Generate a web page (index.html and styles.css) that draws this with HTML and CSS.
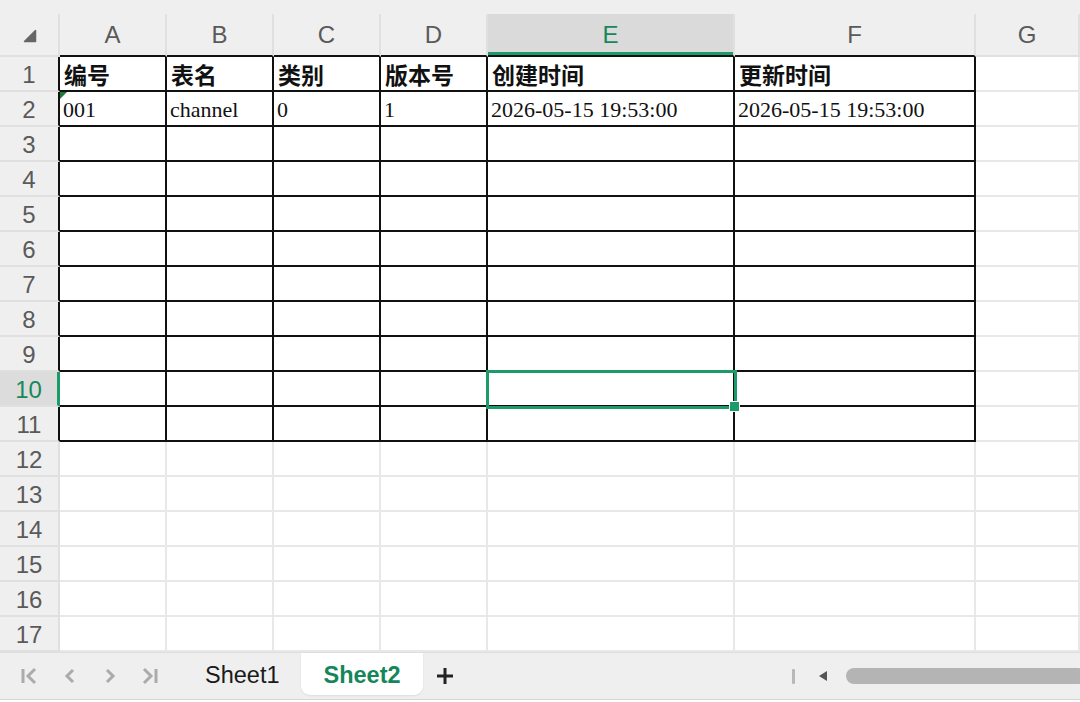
FILE: index.html
```html
<!DOCTYPE html>
<html lang="zh-CN">
  <head>
    <meta charset="UTF-8" />
    <meta name="viewport" content="width=device-width, initial-scale=1.0" />
    <title>Sheet2</title>
    <link rel="stylesheet" href="styles.css">
  </head>
  <body>
    <div class="book">
      <div class="top-strip"></div>
      <div class="sheet">
        <!-- column headers -->
        <div class="ch corner">
          <svg width="14" height="14" viewBox="0 0 14 14"><path d="M12.5 1.5 L12.5 12.5 L1.5 12.5 Z" fill="#666" stroke="#666" stroke-width="1.5" stroke-linejoin="round"/></svg>
        </div>
        <div class="ch edge">A</div>
        <div class="ch edge">B</div>
        <div class="ch edge">C</div>
        <div class="ch edge">D</div>
        <div class="ch edge active">E</div>
        <div class="ch edge">F</div>
        <div class="ch">G</div>

        <div class="rh edge">1</div>
        <div class="cell b hd">编号</div>
        <div class="cell b hd">表名</div>
        <div class="cell b hd">类别</div>
        <div class="cell b hd">版本号</div>
        <div class="cell b hd">创建时间</div>
        <div class="cell b hd">更新时间</div>
        <div class="cell"></div>

        <div class="rh edge">2</div>
        <div class="cell b note">001</div>
        <div class="cell b">channel</div>
        <div class="cell b">0</div>
        <div class="cell b">1</div>
        <div class="cell b">2026-05-15 19:53:00</div>
        <div class="cell b">2026-05-15 19:53:00</div>
        <div class="cell"></div>

        <div class="rh edge">3</div>
        <div class="cell b"></div><div class="cell b"></div><div class="cell b"></div><div class="cell b"></div><div class="cell b"></div><div class="cell b"></div><div class="cell"></div>
        <div class="rh edge">4</div>
        <div class="cell b"></div><div class="cell b"></div><div class="cell b"></div><div class="cell b"></div><div class="cell b"></div><div class="cell b"></div><div class="cell"></div>
        <div class="rh edge">5</div>
        <div class="cell b"></div><div class="cell b"></div><div class="cell b"></div><div class="cell b"></div><div class="cell b"></div><div class="cell b"></div><div class="cell"></div>
        <div class="rh edge">6</div>
        <div class="cell b"></div><div class="cell b"></div><div class="cell b"></div><div class="cell b"></div><div class="cell b"></div><div class="cell b"></div><div class="cell"></div>
        <div class="rh edge">7</div>
        <div class="cell b"></div><div class="cell b"></div><div class="cell b"></div><div class="cell b"></div><div class="cell b"></div><div class="cell b"></div><div class="cell"></div>
        <div class="rh edge">8</div>
        <div class="cell b"></div><div class="cell b"></div><div class="cell b"></div><div class="cell b"></div><div class="cell b"></div><div class="cell b"></div><div class="cell"></div>
        <div class="rh edge">9</div>
        <div class="cell b"></div><div class="cell b"></div><div class="cell b"></div><div class="cell b"></div><div class="cell b"></div><div class="cell b"></div><div class="cell"></div>
        <div class="rh active">10</div>
        <div class="cell b"></div><div class="cell b"></div><div class="cell b"></div><div class="cell b"></div>
        <div class="cell b selected"><span class="sel"><span class="handle"></span></span></div>
        <div class="cell b"></div><div class="cell"></div>
        <div class="rh edge">11</div>
        <div class="cell b"></div><div class="cell b"></div><div class="cell b"></div><div class="cell b"></div><div class="cell b"></div><div class="cell b"></div><div class="cell"></div>

        <div class="rh">12</div>
        <div class="cell"></div><div class="cell"></div><div class="cell"></div><div class="cell"></div><div class="cell"></div><div class="cell"></div><div class="cell"></div>
        <div class="rh">13</div>
        <div class="cell"></div><div class="cell"></div><div class="cell"></div><div class="cell"></div><div class="cell"></div><div class="cell"></div><div class="cell"></div>
        <div class="rh">14</div>
        <div class="cell"></div><div class="cell"></div><div class="cell"></div><div class="cell"></div><div class="cell"></div><div class="cell"></div><div class="cell"></div>
        <div class="rh">15</div>
        <div class="cell"></div><div class="cell"></div><div class="cell"></div><div class="cell"></div><div class="cell"></div><div class="cell"></div><div class="cell"></div>
        <div class="rh">16</div>
        <div class="cell"></div><div class="cell"></div><div class="cell"></div><div class="cell"></div><div class="cell"></div><div class="cell"></div><div class="cell"></div>
        <div class="rh">17</div>
        <div class="cell"></div><div class="cell"></div><div class="cell"></div><div class="cell"></div><div class="cell"></div><div class="cell"></div><div class="cell"></div>
      </div>

      <div class="tabbar">
        <div class="nav">
          <span class="nav-btn">
            <svg width="20" height="20" viewBox="0 0 20 20"><path d="M3 3v14M15 3l-7 7 7 7" fill="none" stroke="#ababab" stroke-width="3"/></svg>
          </span>
          <span class="nav-btn">
            <svg width="20" height="20" viewBox="0 0 20 20"><path d="M13 4l-6 6 6 6" fill="none" stroke="#ababab" stroke-width="3"/></svg>
          </span>
          <span class="nav-btn">
            <svg width="20" height="20" viewBox="0 0 20 20"><path d="M7 4l6 6-6 6" fill="none" stroke="#ababab" stroke-width="3"/></svg>
          </span>
          <span class="nav-btn">
            <svg width="20" height="20" viewBox="0 0 20 20"><path d="M4 3l7 7-7 7M16 3v14" fill="none" stroke="#ababab" stroke-width="3"/></svg>
          </span>
        </div>
        <div class="tab">Sheet1</div>
        <div class="tab current">Sheet2</div>
        <span class="add">
          <svg width="20" height="20" viewBox="0 0 20 20"><path d="M10 2v16M2 10h16" stroke="#222" stroke-width="3"/></svg>
        </span>
        <div class="hscroll">
          <span class="split"></span>
          <svg class="arrow" width="10" height="12" viewBox="0 0 10 12"><path d="M9 1v10L1 6z" fill="#555"/></svg>
          <span class="thumb"></span>
        </div>
      </div>
    </div>
  </body>
</html>
```

FILE: styles.css
```css
* {
  box-sizing: border-box;
}
body {
  margin: 0;
  background: #fff;
  font-family: "Liberation Sans", Arial, sans-serif;
  overflow: hidden;
}
.book {
  display: flex;
  flex-direction: column;
  height: 702px;
}
.top-strip {
  height: 14px;
  background: #efefef;
}

/* grid */
.sheet {
  display: grid;
  grid-template-columns: 60px 107px 107px 107px 107px 247px 241px 1fr;
  grid-template-rows: 43px repeat(17, 35px);
}
.ch {
  background: #efefef;
  border-right: 2px solid #e0e0e0;
  border-bottom: 2px solid #e0e0e0;
  display: flex;
  align-items: center;
  justify-content: center;
  font-size: 24px;
  color: #5a5a5a;
}
.ch.edge {
  border-bottom-color: #111;
}
.ch.active {
  background: #dadada;
  color: #17885b;
  box-shadow: inset 0 -3px 0 #1c9a69;
}
.corner {
  align-items: flex-end;
  padding-bottom: 12px;
  padding-left: 2px;
}
.rh {
  background: #efefef;
  border-right: 2px solid #e0e0e0;
  border-bottom: 2px solid #e0e0e0;
  display: flex;
  align-items: center;
  justify-content: center;
  font-size: 24px;
  color: #5a5a5a;
  padding-top: 2px;
}
.rh.edge {
  border-right-color: #111;
}
.rh.active {
  background: #dcdcdc;
  color: #17885b;
  border-right: 3px solid #1c9a69;
}
.cell {
  position: relative;
  border-right: 2px solid #e8e8e8;
  border-bottom: 2px solid #e8e8e8;
  display: flex;
  align-items: center;
  padding: 2px 0 0 3px;
  font-family: "Liberation Serif", "Noto Sans CJK SC", serif;
  font-size: 22px;
  color: #111;
  white-space: nowrap;
}
.cell.b {
  border-right-color: #111;
  border-bottom-color: #111;
}
.cell.hd {
  font-family: "Noto Sans CJK SC", sans-serif;
  font-weight: 700;
  font-size: 23px;
  padding-left: 4px;
  padding-top: 0;
}

/* comment marker in the corner */
.cell.note::before {
  content: "";
  position: absolute;
  top: 0;
  left: 0;
  border-top: 7px solid #1e7a34;
  border-right: 7px solid transparent;
}

/* current cell */
.sel {
  position: absolute;
  z-index: 2;
  top: -2px;
  left: -2px;
  right: -4px;
  bottom: -4px;
  border: 3px solid #1c9a69;
}
.handle {
  position: absolute;
  right: -5px;
  bottom: -5px;
  width: 9px;
  height: 9px;
  background: #1c9a69;
  outline: 1px solid #fff;
}

/* sheet tabs */
.tabbar {
  flex: 1;
  display: flex;
  align-items: center;
  background: #efefef;
  border-top: 1px solid #dedede;
  border-bottom: 1px solid #d6d6d6;
  margin-bottom: 2px;
  overflow: hidden;
}
.nav {
  display: flex;
  padding-left: 10px;
  width: 183px;
}
.nav-btn {
  width: 40px;
  display: flex;
  justify-content: center;
}
.tab {
  align-self: stretch;
  display: flex;
  align-items: center;
  padding: 0 22px 2px;
  font-size: 23.5px;
  color: #1a1a1a;
}
.tab.current {
  background: #fff;
  color: #15865a;
  font-weight: 700;
  border-radius: 0 0 9px 9px;
  margin-top: -1px;
  margin-bottom: 4px;
  padding: 4px 22px 0;
  box-shadow: 0 1px 2px rgba(0, 0, 0, 0.08);
}
.add {
  display: flex;
  margin-left: 12px;
}
.hscroll {
  margin-left: auto;
  display: flex;
  align-items: center;
}
.split {
  width: 3px;
  height: 15px;
  background: #b8b8b8;
  border-radius: 1px;
  margin-right: 23px;
}
.arrow {
  margin-right: 18px;
}
.thumb {
  width: 240px;
  height: 16px;
  border-radius: 8px;
  background: #b4b4b4;
  margin-right: -6px;
}
```
